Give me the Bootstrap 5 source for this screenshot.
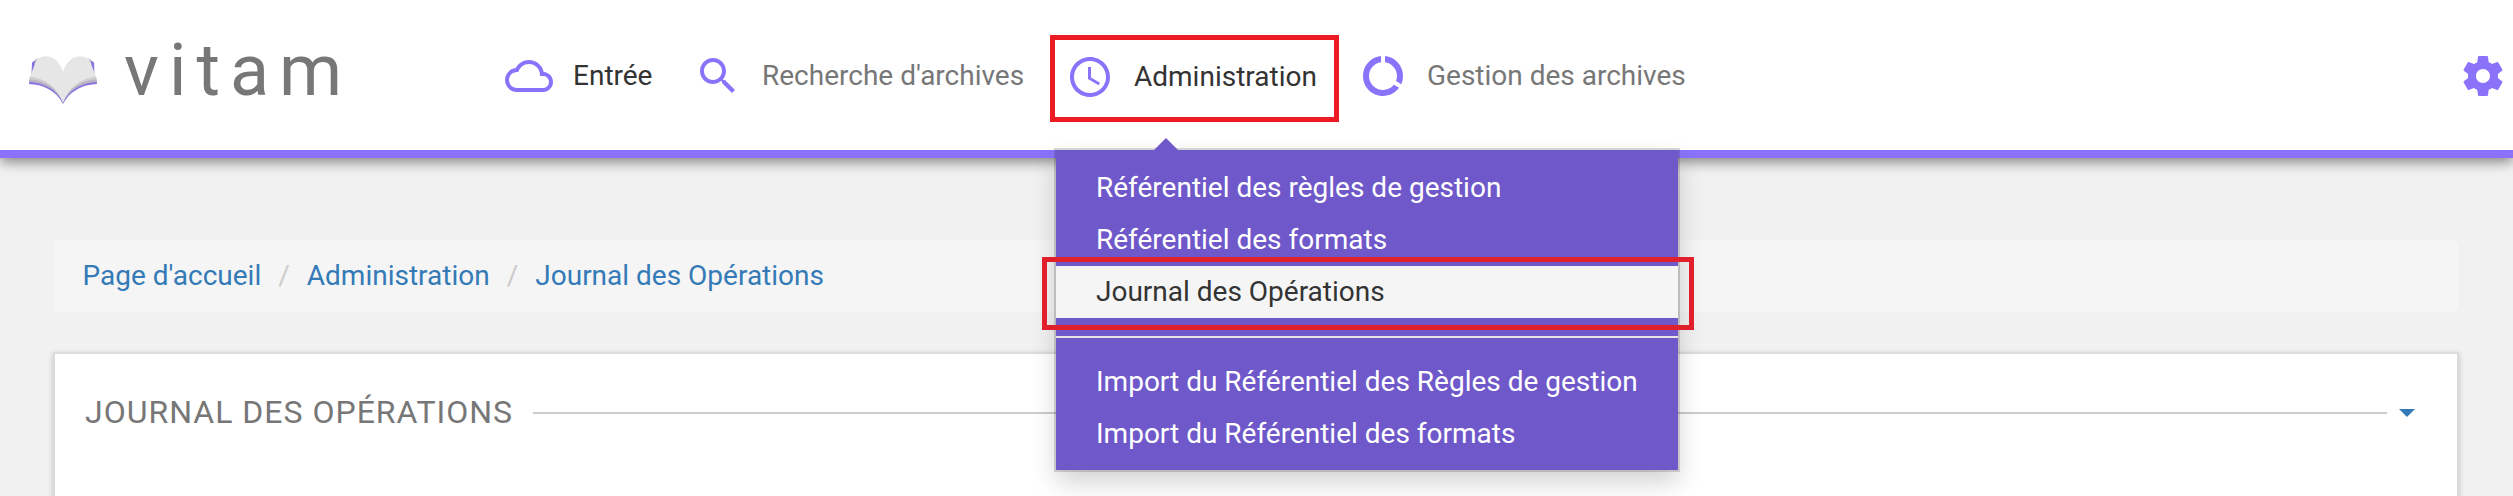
<!DOCTYPE html>
<html lang="fr">
<head>
<meta charset="utf-8">
<title>Vitam - Journal des Opérations</title>
<link href="https://cdn.jsdelivr.net/npm/bootstrap@5.3.0/dist/css/bootstrap.min.css" rel="stylesheet">
<style>
body{font-family:Roboto,"Liberation Sans",sans-serif;font-size:28px;line-height:40px;background:#f1f1f1;color:#777;height:496px;overflow:hidden}
.topbar{height:158px;border-bottom:8px solid #8a73fa;box-shadow:0 4px 12px rgba(0,0,0,.45);padding:0 6px 0 29px;z-index:5}
.wordmark{font-size:72px;line-height:84px;letter-spacing:10px;color:#777}
.brand-box{width:476px;padding-bottom:9px}
.book{width:68px;height:50px;margin-top:17px;margin-right:27px}
.main-nav{padding-top:35px}
.entry{height:87px;color:#777;white-space:nowrap;padding-bottom:5px}
.entry svg,.gear{width:48px;height:48px;fill:#8a73fa;flex:none}
.entry span{margin-left:20px}
.entry.dark{color:#333}
.e1{width:189px}.e2{width:356px}
.e3{width:289px;border:5px solid #ed1c24;padding:0 0 3px 11px}
.e4{padding-left:20px}
.gear{margin-top:52px}
.menu{top:150px;left:1056px;width:622px;height:320px;background:#6f58c9;padding-top:12px;box-shadow:0 0 0 2px rgba(0,0,0,.15),0 12px 24px rgba(0,0,0,.18);z-index:10}
.menu::before{content:"";position:absolute;left:98px;top:-12px;border:12px solid transparent;border-top:0;border-bottom-color:#6f58c9}
.menu a{display:block;height:52px;line-height:52px;padding-left:40px;color:#fff;text-decoration:none;white-space:nowrap}
.menu a.current{background:#f5f5f5;color:#333}
.menu hr{height:2px;margin:18px 0;border:0;background:#e5e5e5;opacity:1}
.marker{left:-14px;top:107px;width:652px;height:73px;border:5px solid #e0202c}
.page{padding:82px 54px 0}
.crumbs{height:72px;border-radius:8px;background:#f5f5f5;padding-left:28.5px;margin-bottom:42px}
.crumbs a{color:#337ab7;text-decoration:none}
.crumbs i{font-style:normal;color:#ccc;width:45.6px;text-align:center}
.panel{height:160px;background:#fff;margin-right:2px;margin-left:1px;padding:39px 42px 0 30px;box-shadow:0 0 0 2px #dcdcdc,0 2px 6px 2px rgba(0,0,0,.2)}
.heading{font-size:32px;line-height:38px;padding-bottom:2px;letter-spacing:1px}
.rule{height:2px;background:#ccc;margin:0 12px 0 20px}
.toggle{width:0;height:0;border:8px solid transparent;border-bottom:0;border-top-color:#337ab7}
</style>
<script src="https://cdn.jsdelivr.net/npm/bootstrap@5.3.0/dist/js/bootstrap.bundle.min.js"></script>
</head>
<body class="position-relative">
<header class="topbar bg-white d-flex position-relative">
  <a class="brand-box d-flex align-items-center flex-shrink-0 text-decoration-none" href="#">
    <svg class="book" viewBox="0 0 68 50">
      <path fill="#8a73e0" d="M3 8.500 7 5.500 5 20H2.500zM65 8.500 61 5.500 63 20H65.500zM.5 26 0 30C13 30.500 27 36 34 50 41 36 55 30.500 68 30L67.500 26Z"/>
      <path fill="#b9b4c4" d="M6 6 9 4 4 22ZM62 6 59 4 64 22ZM1 22.500 0 28C14 28.500 28 35 34 49 40 35 54 28.500 68 28L67 22.500Z"/>
      <path fill="#cfcfcf" d="M1 22 .5 25.500C14 26 28 33 34 48.500 40 33 54 26 67.500 25.500L67 22Z"/>
      <path fill="#e6e6e6" d="M8 5C17-1 29 2 34 18 39 2 51-1 60 5L67 22.500C53 24 40 33 34 48 28 33 15 24 1 22.500Z"/>
    </svg>
    <span class="wordmark">vitam</span>
  </a>
  <nav class="main-nav d-flex align-items-start">
    <div class="entry e1 dark d-flex align-items-center"><svg viewBox="0 0 24 24"><path d="M19.35 10.04C18.67 6.59 15.64 4 12 4 9.11 4 6.6 5.64 5.35 8.04 2.34 8.36 0 10.91 0 14c0 3.31 2.69 6 6 6h13c2.76 0 5-2.24 5-5 0-2.64-2.05-4.78-4.65-4.96zM19 18H6c-2.21 0-4-1.79-4-4s1.79-4 4-4h.71C7.37 7.69 9.48 6 12 6c3.04 0 5.5 2.46 5.5 5.5v.5H19c1.66 0 3 1.34 3 3s-1.34 3-3 3z"/></svg><span>Entrée</span></div>
    <div class="entry e2 d-flex align-items-center"><svg viewBox="0 0 24 24"><path d="M15.5 14h-.79l-.28-.27C15.41 12.59 16 11.11 16 9.5 16 5.91 13.09 3 9.5 3S3 5.91 3 9.5 5.91 16 9.5 16c1.61 0 3.09-.59 4.23-1.57l.27.28v.79l5 4.99L20.49 19l-4.99-5zm-6 0C7.01 14 5 11.99 5 9.5S7.01 5 9.5 5 14 7.01 14 9.5 11.99 14 9.5 14z"/></svg><span>Recherche d'archives</span></div>
    <div class="entry e3 dark d-flex align-items-center"><svg viewBox="0 0 24 24"><path d="M11.99 2C6.47 2 2 6.48 2 12s4.47 10 9.99 10C17.52 22 22 17.52 22 12S17.52 2 11.99 2zM12 20c-4.42 0-8-3.58-8-8s3.58-8 8-8 8 3.58 8 8-3.58 8-8 8zm.5-13H11v6l5.25 3.15.75-1.23-4.5-2.67z"/></svg><span>Administration</span></div>
    <div class="entry e4 d-flex align-items-center"><svg viewBox="0 0 24 24"><path d="M13 2.05v3.03c3.39.49 6 3.39 6 6.92 0 .9-.18 1.75-.48 2.54l2.6 1.53c.56-1.24.88-2.62.88-4.07 0-5.18-3.95-9.45-9-9.95zM12 19c-3.87 0-7-3.13-7-7 0-3.53 2.61-6.43 6-6.92V2.05c-5.06.5-9 4.76-9 9.95 0 5.52 4.47 10 9.99 10 3.31 0 6.24-1.61 8.06-4.09l-2.6-1.53C16.17 17.98 14.21 19 12 19z"/></svg><span>Gestion des archives</span></div>
  </nav>
  <svg class="gear ms-auto" viewBox="0 0 24 24"><path d="M19.43 12.98c.04-.32.07-.64.07-.98s-.03-.66-.07-.98l2.11-1.65c.19-.15.24-.42.12-.64l-2-3.46c-.12-.22-.39-.3-.61-.22l-2.49 1c-.52-.4-1.08-.73-1.69-.98l-.38-2.65C14.46 2.18 14.25 2 14 2h-4c-.25 0-.46.18-.49.42l-.38 2.65c-.61.25-1.17.59-1.69.98l-2.49-1c-.23-.09-.49 0-.61.22l-2 3.46c-.13.22-.07.49.12.64l2.11 1.65c-.04.32-.07.65-.07.98s.03.66.07.98l-2.11 1.65c-.19.15-.24.42-.12.64l2 3.46c.12.22.39.3.61.22l2.49-1c.52.4 1.08.73 1.69.98l.38 2.65c.03.24.24.42.49.42h4c.25 0 .46-.18.49-.42l.38-2.65c.61-.25 1.17-.59 1.69-.98l2.49 1c.23.09.49 0 .61-.22l2-3.46c.12-.22.07-.49-.12-.64l-2.11-1.65zM12 15.5c-1.93 0-3.5-1.57-3.5-3.5s1.57-3.5 3.5-3.5 3.5 1.57 3.5 3.5-1.57 3.5-3.5 3.5z"/></svg>
</header>
<div class="menu position-absolute">
  <a href="#">Référentiel des règles de gestion</a>
  <a href="#">Référentiel des formats</a>
  <a href="#" class="current">Journal des Opérations</a>
  <hr>
  <a href="#">Import du Référentiel des Règles de gestion</a>
  <a href="#">Import du Référentiel des formats</a>
  <div class="marker position-absolute"></div>
</div>
<main class="page">
  <div class="crumbs d-flex align-items-center"><a href="#">Page d'accueil</a><i>/</i><a href="#">Administration</a><i>/</i><a href="#">Journal des Opérations</a></div>
  <section class="panel">
    <div class="d-flex align-items-center"><div class="heading text-uppercase text-nowrap">Journal des Opérations</div><div class="rule flex-grow-1"></div><div class="toggle"></div></div>
  </section>
</main>
</body>
</html>
